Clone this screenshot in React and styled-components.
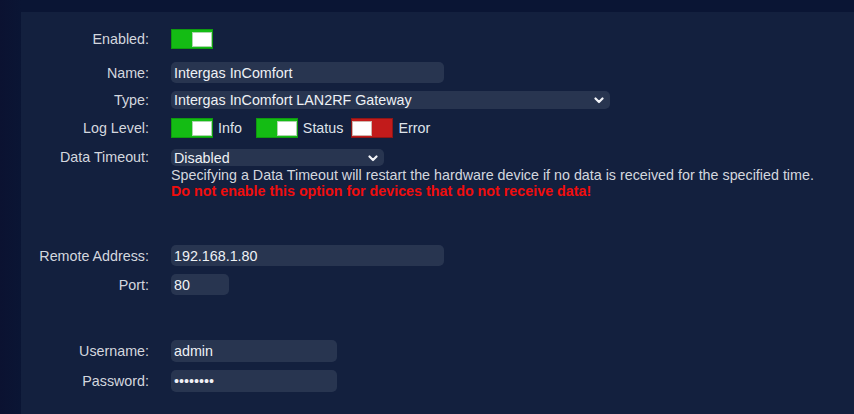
import React from "react";
import styled, { createGlobalStyle } from "styled-components";

const FS = "14.3px";

const Global = createGlobalStyle`
  html, body { margin: 0; padding: 0; background: #0a1534; }
  body { font-family: "Liberation Sans", Arial, sans-serif; font-size: ${FS}; }
  #root { min-height: 414px; }
`;

const Page = styled.div`
  min-height: 414px;
  padding: 12px 0 0 21px;
  box-sizing: border-box;
  background: linear-gradient(90deg, #0b1231 0px, #0a1534 21px);
  display: flex;
`;

const Panel = styled.div`
  flex: 1;
  background: #13203e;
  padding-top: 17px;
  padding-bottom: 20px;
  display: flex;
  flex-direction: column;
`;

const Row = styled.div`
  display: grid;
  grid-template-columns: 128px 1fr;
  column-gap: 22px;
  align-items: ${(p) => (p.$top ? "start" : "center")};
  margin-top: ${(p) => p.$mt || 0}px;
`;

const Label = styled.label`
  text-align: right;
  color: #d3d7de;
  font-size: ${FS};
  line-height: ${(p) => p.$lh || 16}px;
  white-space: nowrap;
`;

const Input = styled.input`
  box-sizing: border-box;
  width: ${(p) => p.$w}px;
  height: ${(p) => p.$h || 21}px;
  border: none;
  outline: none;
  border-radius: 5px;
  background: #283550;
  color: #eef1f5;
  font-family: "Liberation Sans", Arial, sans-serif;
  font-size: ${FS};
  padding: 0 3px;
  margin: 0;
`;

const SelectWrap = styled.div`
  position: relative;
  width: ${(p) => p.$w}px;
  height: ${(p) => p.$h}px;
`;

const Select = styled.select`
  appearance: none;
  -webkit-appearance: none;
  box-sizing: border-box;
  width: 100%;
  height: 100%;
  border: none;
  outline: none;
  border-radius: 5px;
  background: #283550;
  color: #eef1f5;
  font-family: "Liberation Sans", Arial, sans-serif;
  font-size: ${FS};
  padding: 0 3px;
  margin: 0;
`;

const Chevron = styled.svg`
  position: absolute;
  right: 6px;
  top: 50%;
  margin-top: -3px;
  pointer-events: none;
`;

const Switch = styled.span`
  box-sizing: border-box;
  width: 42px;
  height: 20px;
  display: inline-flex;
  align-items: center;
  justify-content: ${(p) => (p.$on ? "flex-end" : "flex-start")};
  padding: 0 1px;
  background: ${(p) => (p.$on ? "#14bc14" : "#c21b1b")};
  border: 1px solid ${(p) => (p.$on ? "#0f9a10" : "#8e1616")};
  flex: none;
`;

const Knob = styled.span`
  width: 18px;
  height: 13px;
  background: #fff;
  box-shadow: 0 0 0 1px rgba(210, 220, 210, 0.8);
`;

const Levels = styled.div`
  display: flex;
  align-items: center;
`;

const LevelText = styled.span`
  color: #dfe3ea;
  margin-left: 5px;
  margin-right: ${(p) => p.$mr}px;
  line-height: 16px;
`;

const Stack = styled.div`
  display: flex;
  flex-direction: column;
`;

const Help = styled.div`
  color: #d3d7de;
  line-height: 16px;
  margin-top: 1px;
  white-space: nowrap;
`;

const Warn = styled.div`
  color: #f10d0d;
  font-weight: bold;
  line-height: 16px;
  white-space: nowrap;
`;

const ToggleCell = styled.div`
  display: flex;
`;

const Chev = () => (
  <Chevron width="10" height="7" viewBox="0 0 10 7">
    <path d="M1.5 1.5 L5 5 L8.5 1.5" fill="none" stroke="#f2f4f8" strokeWidth="2.2" strokeLinecap="round" strokeLinejoin="round" />
  </Chevron>
);

const Toggle = ({ on }) => (
  <Switch $on={on}>
    <Knob />
  </Switch>
);

export default function App() {
  return (
    <>
      <Global />
      <Page>
        <Panel>
          <Row>
            <Label $lh={20}>Enabled:</Label>
            <ToggleCell>
              <Toggle on />
            </ToggleCell>
          </Row>
          <Row $mt={13}>
            <Label>Name:</Label>
            <Input $w={273} defaultValue="Intergas InComfort" readOnly />
          </Row>
          <Row $mt={8}>
            <Label>Type:</Label>
            <SelectWrap $w={439} $h={18}>
              <Select defaultValue="lan2rf">
                <option value="lan2rf">Intergas InComfort LAN2RF Gateway</option>
              </Select>
              <Chev />
            </SelectWrap>
          </Row>
          <Row $mt={9}>
            <Label>Log Level:</Label>
            <Levels>
              <Toggle on />
              <LevelText $mr={14}>Info</LevelText>
              <Toggle on />
              <LevelText $mr={8}>Status</LevelText>
              <Toggle on={false} />
              <LevelText $mr={0}>Error</LevelText>
            </Levels>
          </Row>
          <Row $mt={11} $top>
            <Label $lh={17}>Data Timeout:</Label>
            <Stack>
              <SelectWrap $w={213} $h={17}>
                <Select defaultValue="disabled">
                  <option value="disabled">Disabled</option>
                </Select>
                <Chev />
              </SelectWrap>
              <Help>Specifying a Data Timeout will restart the hardware device if no data is received for the specified time.</Help>
              <Warn>Do not enable this option for devices that do not receive data!</Warn>
            </Stack>
          </Row>
          <Row $mt={46}>
            <Label>Remote Address:</Label>
            <Input $w={273} defaultValue="192.168.1.80" readOnly />
          </Row>
          <Row $mt={8}>
            <Label>Port:</Label>
            <Input $w={58} defaultValue="80" readOnly />
          </Row>
          <Row $mt={45}>
            <Label>Username:</Label>
            <Input $w={166} $h={22} defaultValue="admin" readOnly />
          </Row>
          <Row $mt={8}>
            <Label>Password:</Label>
            <Input $w={166} $h={22} type="password" defaultValue="12345678" readOnly />
          </Row>
        </Panel>
      </Page>
    </>
  );
}
